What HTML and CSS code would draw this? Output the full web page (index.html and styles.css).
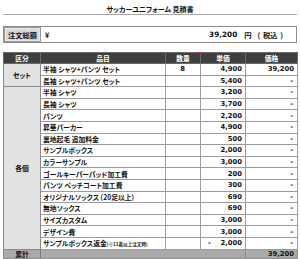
FILE: index.html
```html
<!DOCTYPE html>
<html lang="ja">
<head>
<meta charset="utf-8">
<title>サッカーユニフォーム 見積書</title>
<link rel="stylesheet" href="styles.css">
</head>
<body>
<div class="sheet">
  <h1 class="title">サッカーユニフォーム 見積書</h1>

  <div class="order">
    <div class="order-label">注文総額</div>
    <div class="order-value">
      <span class="yen">¥</span>
      <span class="sum">39,200</span>
      <span class="unit">円</span>
      <span class="tax">( 税込 )</span>
    </div>
  </div>

  <table class="quote">
    <colgroup>
      <col class="c-cat"><col class="c-item"><col class="c-qty"><col class="c-price"><col class="c-total">
    </colgroup>
    <thead>
      <tr>
        <th>区分</th>
        <th>品目</th>
        <th class="qty-head">数量<span class="note-mark"></span></th>
        <th>単価</th>
        <th>価格</th>
      </tr>
    </thead>
    <tbody>
      <tr>
        <td class="cat" rowspan="2">セット</td>
        <td class="item">半袖 シャツ+パンツ セット</td>
        <td class="num qty">8</td>
        <td class="num">4,900</td>
        <td class="num">39,200</td>
      </tr>
      <tr>
        <td class="item">長袖 シャツ+パンツ セット</td>
        <td class="num qty"></td>
        <td class="num">5,400</td>
        <td class="num dash">-</td>
      </tr>
      <tr>
        <td class="cat" rowspan="14">各個</td>
        <td class="item">半袖 シャツ</td>
        <td class="num qty"></td>
        <td class="num">3,200</td>
        <td class="num dash">-</td>
      </tr>
      <tr><td class="item">長袖 シャツ</td><td class="num qty"></td><td class="num">3,700</td><td class="num dash">-</td></tr>
      <tr><td class="item">パンツ</td><td class="num qty"></td><td class="num">2,200</td><td class="num dash">-</td></tr>
      <tr><td class="item">昇華パーカー</td><td class="num qty"></td><td class="num">4,900</td><td class="num dash">-</td></tr>
      <tr><td class="item">裏地起毛 追加料金</td><td class="num qty"></td><td class="num">500</td><td class="num dash">-</td></tr>
      <tr><td class="item">サンプルボックス</td><td class="num qty"></td><td class="num">2,000</td><td class="num dash">-</td></tr>
      <tr><td class="item">カラーサンプル</td><td class="num qty"></td><td class="num">3,000</td><td class="num dash">-</td></tr>
      <tr><td class="item">ゴールキーパーパッド加工費</td><td class="num qty"></td><td class="num">200</td><td class="num dash">-</td></tr>
      <tr><td class="item">パンツ ペッチコート加工費</td><td class="num qty"></td><td class="num">300</td><td class="num dash">-</td></tr>
      <tr><td class="item">オリジナルソックス (20足以上)</td><td class="num qty"></td><td class="num">690</td><td class="num dash">-</td></tr>
      <tr><td class="item">無地ソックス</td><td class="num qty"></td><td class="num">690</td><td class="num dash">-</td></tr>
      <tr><td class="item">サイズカスタム</td><td class="num qty"></td><td class="num">3,000</td><td class="num dash">-</td></tr>
      <tr><td class="item">デザイン費</td><td class="num qty"></td><td class="num">3,000</td><td class="num dash">-</td></tr>
      <tr>
        <td class="item">サンプルボックス返金<small class="cond">(※11着以上注文時)</small></td>
        <td class="num qty"></td>
        <td class="num neg"><span class="minus">-</span><span>2,000</span></td>
        <td class="num dash">-</td>
      </tr>
    </tbody>
    <tfoot>
      <tr>
        <td class="sum-label">累計</td>
        <td class="sum-fill" colspan="3"></td>
        <td class="num sum-total">39,200</td>
      </tr>
    </tfoot>
  </table>
</div>
</body>
</html>
```

FILE: styles.css
```css
html, body {
  margin: 0;
  padding: 0;
  background: #ffffff;
}

body {
  font-family: "Noto Sans CJK JP", "DejaVu Sans", sans-serif;
  font-feature-settings: "palt";
  color: #111;
}

.sheet {
  width: 294px;
  padding: 0 3px;
}

.title {
  margin: 0;
  padding-top: 4px;
  height: 10px;
  line-height: 10px;
  font-size: 7px;
  font-weight: 700;
  text-align: center;
  border-bottom: 1px solid #a8a8a8;
}

.order {
  margin-top: 11px;
  display: flex;
  height: 17px;
  border: 1px solid #8c8c8c;
  box-sizing: border-box;
}

.order-label {
  width: 37px;
  flex: none;
  box-sizing: border-box;
  background: #d9d9d9;
  border: 1px solid #9a9a9a;
  box-shadow: inset 0 0 0 1px #e8e8e8;
  font-size: 7.2px;
  font-weight: 700;
  display: flex;
  align-items: center;
  justify-content: center;
}

.order-value {
  flex: 1;
  display: flex;
  align-items: center;
  padding: 0 13px 0 4px;
  font-family: "DejaVu Sans", "Noto Sans CJK JP", sans-serif;
  font-size: 7.3px;
  font-weight: 700;
}

.yen {
  font-family: "Noto Sans CJK JP", sans-serif;
}

.sum {
  margin-left: auto;
}

.unit {
  margin-left: 7px;
  font-family: "Noto Sans CJK JP", sans-serif;
}

.tax {
  margin-left: 6px;
  font-family: "Noto Sans CJK JP", sans-serif;
  word-spacing: 1px;
}

.quote {
  margin-top: 9px;
  width: 294px;
  table-layout: fixed;
  border-collapse: collapse;
  font-size: 6.8px;
  font-weight: 700;
}

.c-cat { width: 37px; }
.c-item { width: 125px; }
.c-qty { width: 35px; }
.c-price { width: 45px; }
.c-total { width: 52px; }

.quote th {
  height: 10px;
  padding: 0;
  background: #3f3f3f;
  color: #ffffff;
  font-weight: 700;
  text-align: center;
  border: 1px solid #6a6a6a;
  line-height: 10px;
}

.qty-head {
  position: relative;
}

.note-mark {
  position: absolute;
  top: -1px;
  right: -1px;
  width: 0;
  height: 0;
  border-top: 3px solid #e01010;
  border-left: 3px solid transparent;
}

.quote td {
  height: 10.6px;
  padding: 0 2px;
  line-height: 10px;
  border: 1px solid #9c9c9c;
  white-space: nowrap;
  overflow: hidden;
}

.quote td.cat {
  background: #e2e2e2;
  text-align: center;
  border-color: #8a8a8a;
}

.quote td.item {
  padding-left: 2px;
  border-left-color: #7a7a7a;
}

.num {
  text-align: right;
  font-family: "DejaVu Sans", "Noto Sans CJK JP", sans-serif;
}

.quote td.qty {
  text-align: center;
}

.quote td.num {
  padding-right: 3px;
}

.quote td.dash {
  padding-right: 4px;
}

.quote td.neg {
  text-align: right;
}

.minus {
  float: left;
  padding-left: 5px;
}

.cond {
  font-size: 4.6px;
  font-weight: 700;
}

.quote tfoot td {
  height: 8px;
  line-height: 8px;
  background: #a9a9a9;
  border-color: #8e8e8e;
}

.quote td.sum-label {
  text-align: center;
  font-family: "Noto Sans CJK JP", sans-serif;
  border-right-color: #7a7a7a;
}

.quote td.sum-total {
  border-left-color: #c4c4c4;
}
```
